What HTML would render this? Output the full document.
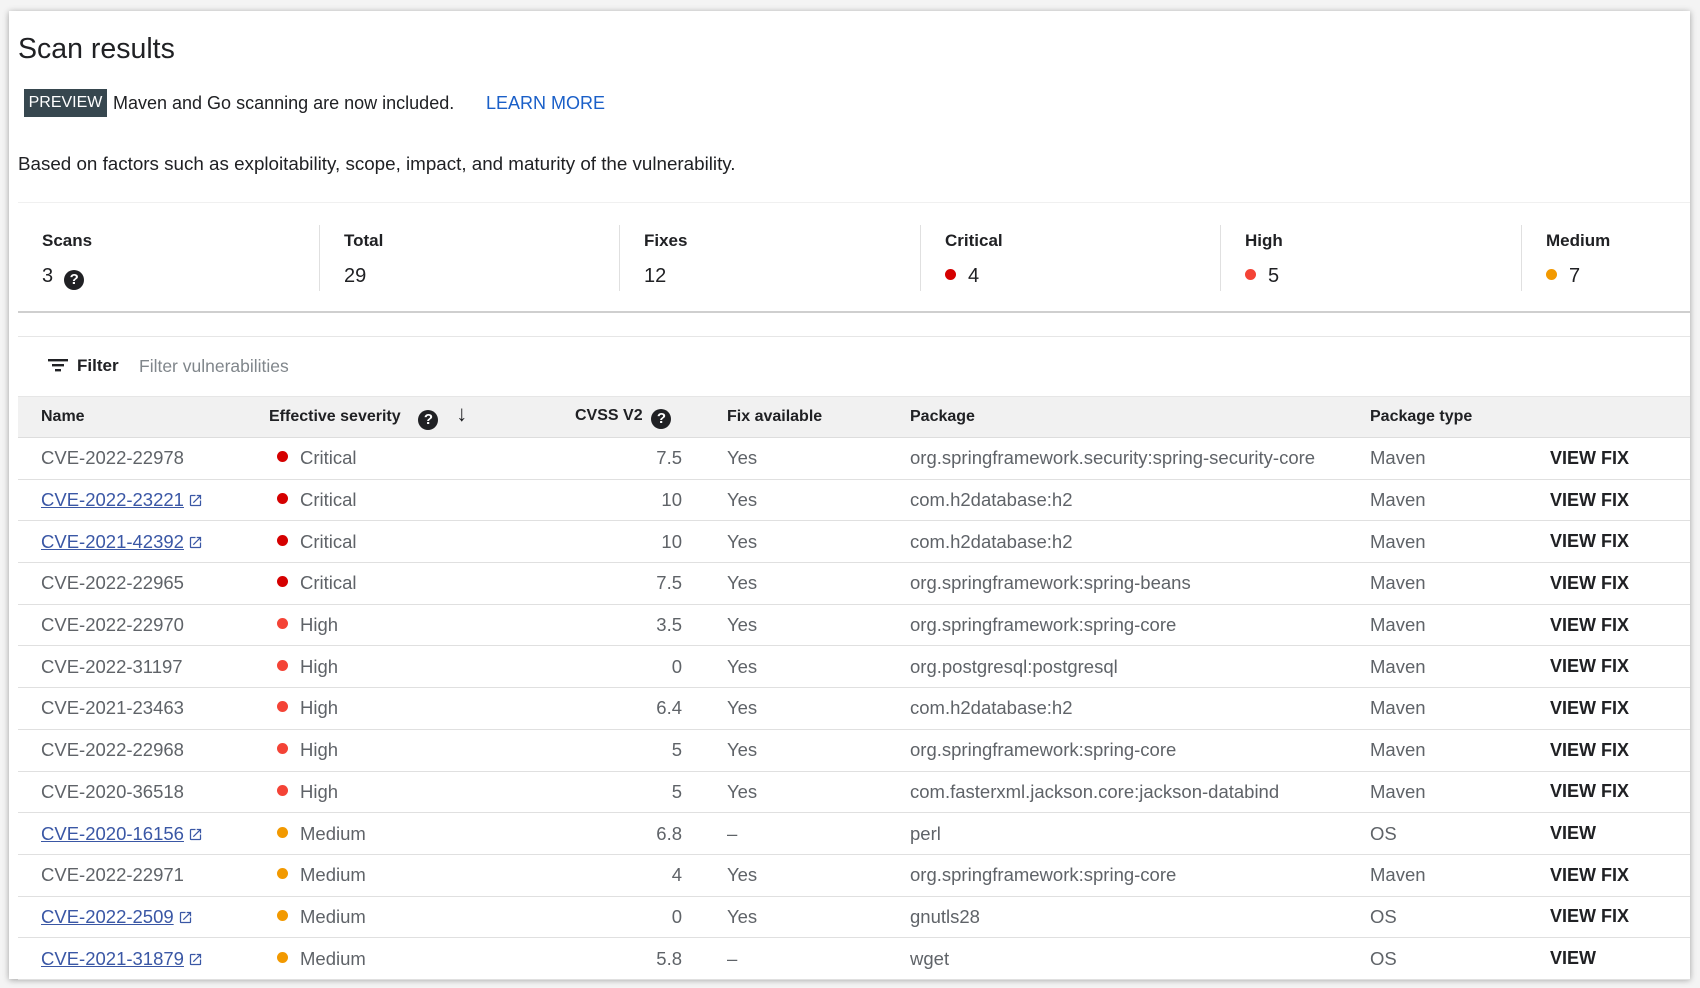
<!DOCTYPE html>
<html><head><meta charset="utf-8"><style>
*{box-sizing:border-box;margin:0;padding:0}
body{width:1700px;height:988px;background:#f4f4f4;font-family:"Liberation Sans",Arial,sans-serif;position:relative;overflow:hidden}
.card{position:absolute;left:9px;top:11px;width:1681px;height:968px;background:#fff;box-shadow:0 1px 6px rgba(0,0,0,.35)}
.abs{position:absolute;white-space:nowrap}
h1{position:absolute;left:9px;top:22px;font-size:28.5px;font-weight:normal;color:#202124}
.badge{left:15px;top:78px;width:83px;height:28px;background:#37474f;color:#fff;font-size:16px;line-height:28px;text-align:center}
.t{color:#202124;font-size:18px}
.stats{position:absolute;left:9px;top:191px;width:1672px;height:111px;border-bottom:2px solid #cfcfcf;border-top:1px solid #f0f0f0}
.col{position:absolute;top:22px;width:300px;height:66px;border-left:1px solid #e0e0e0}
.lab{position:absolute;left:24px;top:6px;font-size:17px;font-weight:bold;color:#202124;white-space:nowrap}
.val{position:absolute;left:24px;top:40px;font-size:20px;color:#202124;white-space:nowrap}
.dot{display:inline-block;width:11px;height:11px;border-radius:50%;margin-right:12px;vertical-align:2px}
.q{display:inline-block;width:20px;height:20px;border-radius:50%;background:#202124;color:#fff;font-size:15px;font-weight:bold;text-align:center;line-height:20px;vertical-align:-2px}
th .q{vertical-align:-3px;margin-top:-4px}
.sep{position:absolute;left:9px;top:325px;width:1672px;height:1px;background:#e6e6e6}
table{position:absolute;left:9px;top:385px;width:1672px;border-collapse:collapse;table-layout:fixed}
th{height:41px;background:#f1f1f1;font-size:16px;font-weight:bold;color:#202124;text-align:left;border-bottom:1px solid #ddd;border-top:1px solid #e6e6e6;white-space:nowrap;line-height:20px}
td{height:41.7px;font-size:18.5px;color:#5f6368;border-bottom:1px solid #e0e0e0;white-space:nowrap;overflow:visible}
a{color:#3a57a5;text-decoration:underline}
.vf{color:#202124;font-weight:bold;font-size:18px}
.r{text-align:right}
</style></head><body>
<div class="card">
<h1>Scan results</h1>
<div class="abs badge">PREVIEW</div>
<div class="abs t" style="left:104px;top:82px">Maven and Go scanning are now included.</div>
<div class="abs" style="left:477px;top:82px;font-size:18px;color:#1a5fc8">LEARN MORE</div>
<div class="abs t" style="left:9px;top:142px;font-size:18.8px">Based on factors such as exploitability, scope, impact, and maturity of the vulnerability.</div>
<div class="stats">
<div class="col" style="left:0;border:none"><div class="lab">Scans</div><div class="val">3 &nbsp;<span class="q">?</span></div></div>
<div class="col" style="left:301px"><div class="lab">Total</div><div class="val">29</div></div>
<div class="col" style="left:601px"><div class="lab">Fixes</div><div class="val">12</div></div>
<div class="col" style="left:902px"><div class="lab">Critical</div><div class="val"><span class="dot" style="background:#d50000"></span>4</div></div>
<div class="col" style="left:1202px"><div class="lab">High</div><div class="val"><span class="dot" style="background:#f44336"></span>5</div></div>
<div class="col" style="left:1503px;width:170px"><div class="lab">Medium</div><div class="val"><span class="dot" style="background:#f29900"></span>7</div></div>
</div>
<div class="sep"></div>
<svg class="abs" style="left:39px;top:346px" width="20" height="16"><rect x="0" y="2" width="20" height="2.4" fill="#202124"/><rect x="4" y="7" width="12" height="2.4" fill="#202124"/><rect x="7" y="12" width="6" height="2.4" fill="#202124"/></svg>
<div class="abs" style="left:68px;top:345px;font-size:17px;font-weight:bold;color:#202124">Filter</div>
<div class="abs" style="left:130px;top:345px;font-size:17.5px;color:#80868b">Filter vulnerabilities</div>
<table>
<colgroup><col style="width:251px"><col style="width:231px"><col style="width:190px"><col style="width:210px"><col style="width:460px"><col style="width:180px"><col style="width:150px"></colgroup>
<tr><th style="padding-left:23px">Name</th><th>Effective severity &nbsp;&nbsp;&nbsp;<span class="q">?</span> &nbsp;&nbsp;&nbsp;<span style="font-size:22px;font-weight:normal">&#8595;</span></th><th style="padding-left:75px">CVSS V2 &nbsp;<span class="q">?</span></th><th style="padding-left:37px">Fix available</th><th style="padding-left:10px">Package</th><th style="padding-left:10px">Package type</th><th></th></tr>
<tbody id="b"></tbody>
</table>
</div>
<script>
var rows=[["CVE-2022-22978",0,"c","7.5","Yes","org.springframework.security:spring-security-core","Maven","VIEW FIX"],
["CVE-2022-23221",1,"c","10","Yes","com.h2database:h2","Maven","VIEW FIX"],
["CVE-2021-42392",1,"c","10","Yes","com.h2database:h2","Maven","VIEW FIX"],
["CVE-2022-22965",0,"c","7.5","Yes","org.springframework:spring-beans","Maven","VIEW FIX"],
["CVE-2022-22970",0,"h","3.5","Yes","org.springframework:spring-core","Maven","VIEW FIX"],
["CVE-2022-31197",0,"h","0","Yes","org.postgresql:postgresql","Maven","VIEW FIX"],
["CVE-2021-23463",0,"h","6.4","Yes","com.h2database:h2","Maven","VIEW FIX"],
["CVE-2022-22968",0,"h","5","Yes","org.springframework:spring-core","Maven","VIEW FIX"],
["CVE-2020-36518",0,"h","5","Yes","com.fasterxml.jackson.core:jackson-databind","Maven","VIEW FIX"],
["CVE-2020-16156",1,"m","6.8","–","perl","OS","VIEW"],
["CVE-2022-22971",0,"m","4","Yes","org.springframework:spring-core","Maven","VIEW FIX"],
["CVE-2022-2509",1,"m","0","Yes","gnutls28","OS","VIEW FIX"],
["CVE-2021-31879",1,"m","5.8","–","wget","OS","VIEW"]];
var sev={c:["Critical","#d50000"],h:["High","#f44336"],m:["Medium","#f29900"]};
var ext='<svg width="15" height="15" viewBox="0 0 24 24" style="vertical-align:-2px;margin-left:4px"><path d="M19 19H5V5h7V3H5a2 2 0 0 0-2 2v14a2 2 0 0 0 2 2h14a2 2 0 0 0 2-2v-7h-2v7zM14 3v2h3.6l-9.8 9.8 1.4 1.4L19 6.4V10h2V3h-7z" fill="#3a57a5"/></svg>';
var h="";rows.forEach(function(r){var s=sev[r[2]];
h+='<tr><td style="padding-left:23px">'+(r[1]?'<a>'+r[0]+'</a>'+ext:r[0])+'</td><td style="padding-left:8px"><span class="dot" style="background:'+s[1]+'"></span>'+s[0]+'</td><td class="r" style="padding-right:8px">'+r[3]+'</td><td style="padding-left:37px">'+r[4]+'</td><td style="padding-left:10px">'+r[5]+'</td><td style="padding-left:10px">'+r[6]+'</td><td class="vf" style="padding-left:10px">'+r[7]+'</td></tr>';});
document.getElementById("b").innerHTML=h;
</script>
</body></html>
